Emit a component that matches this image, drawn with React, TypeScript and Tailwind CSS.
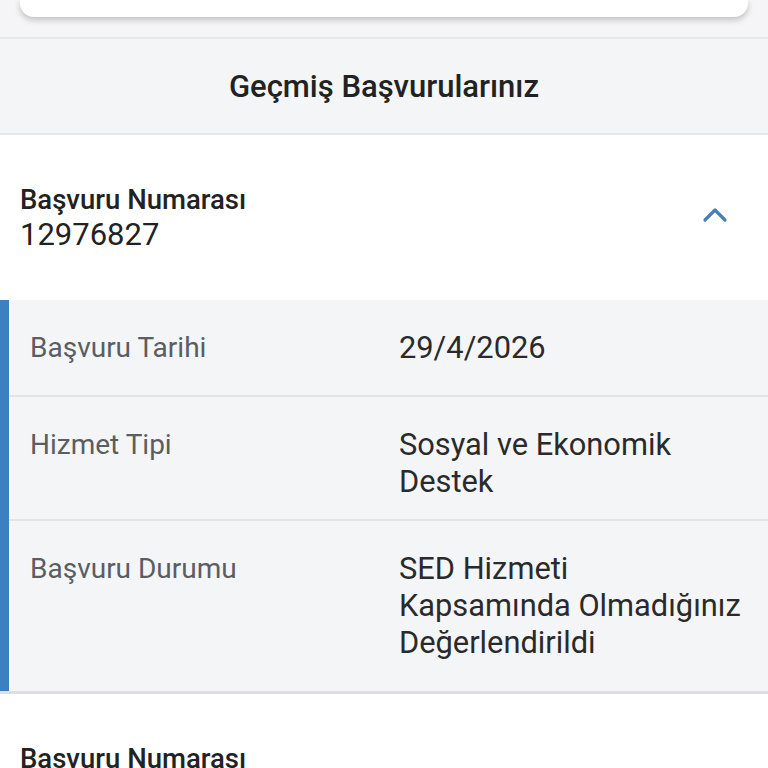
import React from "react";

const rows = [
  { label: "Başvuru Tarihi", value: ["29/4/2026"], h: "h-[97px]" },
  { label: "Hizmet Tipi", value: ["Sosyal ve Ekonomik", "Destek"], h: "h-[124px]" },
  { label: "Başvuru Durumu", value: ["SED Hizmeti", "Kapsamında Olmadığınız", "Değerlendirildi"], h: "h-[170px]" },
];

export default function App() {
  return (
    <div className="w-[768px] h-[768px] overflow-hidden bg-white" style={{ fontFamily: "Roboto, 'Noto Sans', sans-serif" }}>
      <div className="bg-[#f5f5f7] h-[37px] pt-0">
        <div className="mx-[20px] h-[17px] bg-white rounded-b-[14px] shadow-[0_3px_6px_rgba(0,0,0,0.22)]" />
      </div>
      <div className="h-[98px] bg-[#f4f5f7] border-t-[2px] border-b-[2px] border-[#e6e7ea] flex items-center justify-center">
        <span className="text-[31px] font-medium text-[#222222] leading-none">Geçmiş Başvurularınız</span>
      </div>
      <div className="h-[165px] bg-white flex items-start justify-between pl-[20px] pr-[40px] pt-[48px]">
        <div className="flex flex-col">
          <span className="text-[27.5px] font-medium text-[#222222] leading-[34px]">Başvuru Numarası</span>
          <span className="text-[31px] text-[#222222] leading-[36px]">12976827</span>
        </div>
        <svg width="26" height="18" viewBox="0 0 26 18" className="mt-[23px]">
          <path d="M3 14 L13 4 L23 14" fill="none" stroke="#4a7fb5" strokeWidth="3.2" strokeLinecap="round" strokeLinejoin="round" />
        </svg>
      </div>
      <div className="flex border-b-[3px] border-[#dedfe2]">
        <div className="w-[9px] bg-[#3d80c2]" />
        <div className="flex-1 bg-[#f4f5f7]">
          {rows.map((r, i) => (
            <div key={i} className={`${r.h} grid grid-cols-[369px_1fr] pl-[21px] pt-[29px] ${i < rows.length - 1 ? "border-b-[2px] border-[#e2e3e6]" : ""}`}>
              <div className="text-[28px] font-normal text-[#5a5d61] leading-[37px]">{r.label}</div>
              <div className="text-[30.8px] text-[#2a2a2a] leading-[37px]">
                {r.value.map((v, j) => (
                  <div key={j}>{v}</div>
                ))}
              </div>
            </div>
          ))}
        </div>
      </div>
      <div className="bg-white pl-[20px] pt-[48px]">
        <span className="text-[27.5px] font-medium text-[#222222] leading-[34px]">Başvuru Numarası</span>
      </div>
    </div>
  );
}
